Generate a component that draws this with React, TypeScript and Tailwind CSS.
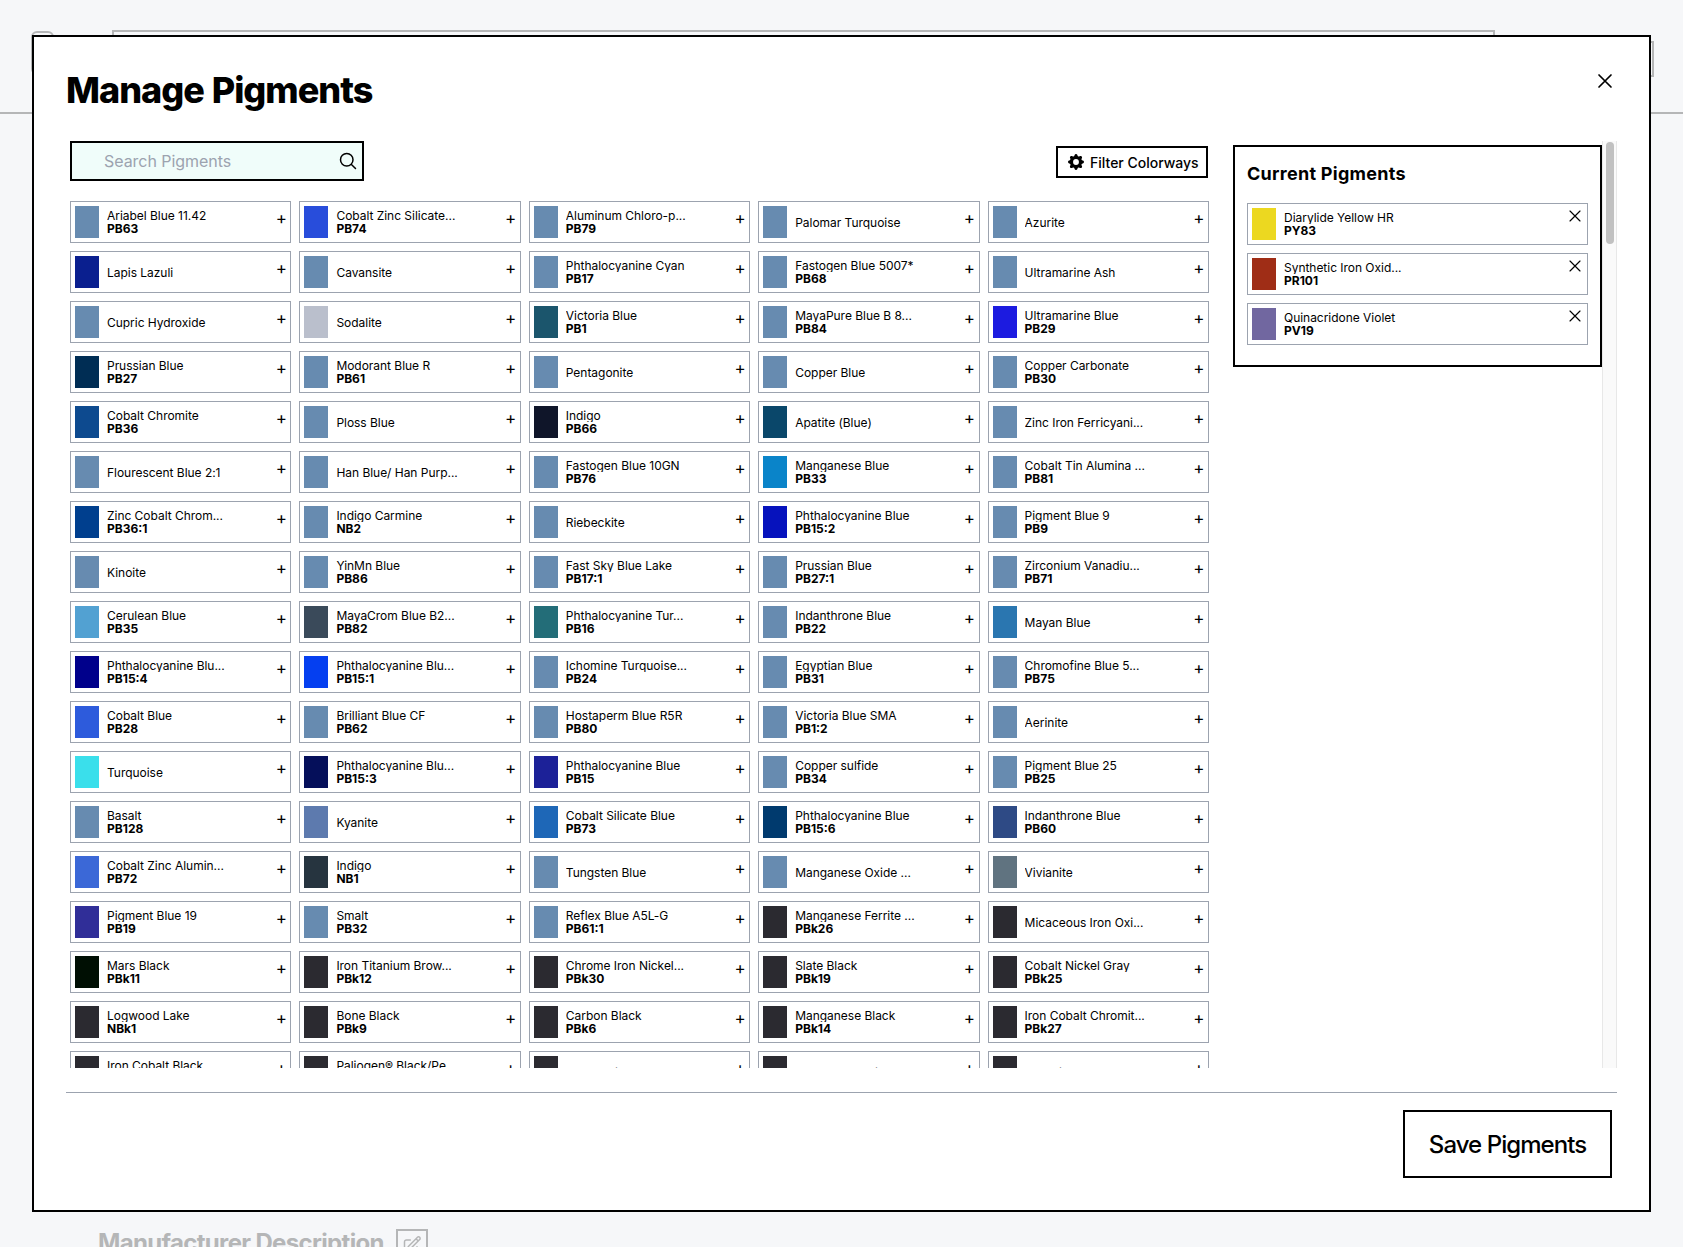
import React from "react";
import { BsGearFill } from "react-icons/bs";

type Pigment = { name: string; code?: string; color: string };

const BLUE = "#678bb0";
const BLACK = "#2b2a30";

const p = (name: string, code?: string, color: string = BLUE): Pigment => ({ name, code, color });

const pigments: Pigment[] = [
  p("Ariabel Blue 11.42", "PB63"),
  p("Cobalt Zinc Silicate...", "PB74", "#284ddb"),
  p("Aluminum Chloro-p...", "PB79"),
  p("Palomar Turquoise"),
  p("Azurite"),
  p("Lapis Lazuli", undefined, "#0a1f8f"),
  p("Cavansite"),
  p("Phthalocyanine Cyan", "PB17"),
  p("Fastogen Blue 5007*", "PB68"),
  p("Ultramarine Ash"),
  p("Cupric Hydroxide"),
  p("Sodalite", undefined, "#babfcc"),
  p("Victoria Blue", "PB1", "#1b556c"),
  p("MayaPure Blue B 8...", "PB84"),
  p("Ultramarine Blue", "PB29", "#1c1be0"),
  p("Prussian Blue", "PB27", "#002d54"),
  p("Modorant Blue R", "PB61"),
  p("Pentagonite"),
  p("Copper Blue"),
  p("Copper Carbonate", "PB30"),
  p("Cobalt Chromite", "PB36", "#0d4a8f"),
  p("Ploss Blue"),
  p("Indigo", "PB66", "#0f1529"),
  p("Apatite (Blue)", undefined, "#0a476a"),
  p("Zinc Iron Ferricyani..."),
  p("Flourescent Blue 2:1"),
  p("Han Blue/ Han Purp..."),
  p("Fastogen Blue 10GN", "PB76"),
  p("Manganese Blue", "PB33", "#0a84c9"),
  p("Cobalt Tin Alumina ...", "PB81"),
  p("Zinc Cobalt Chrom...", "PB36:1", "#003f8e"),
  p("Indigo Carmine", "NB2"),
  p("Riebeckite"),
  p("Phthalocyanine Blue", "PB15:2", "#0612bd"),
  p("Pigment Blue 9", "PB9"),
  p("Kinoite"),
  p("YinMn Blue", "PB86"),
  p("Fast Sky Blue Lake", "PB17:1"),
  p("Prussian Blue", "PB27:1"),
  p("Zirconium Vanadiu...", "PB71"),
  p("Cerulean Blue", "PB35", "#52a1d2"),
  p("MayaCrom Blue B2...", "PB82", "#3a4a5a"),
  p("Phthalocyanine Tur...", "PB16", "#236d78"),
  p("Indanthrone Blue", "PB22"),
  p("Mayan Blue", undefined, "#2a76b0"),
  p("Phthalocyanine Blu...", "PB15:4", "#00008b"),
  p("Phthalocyanine Blu...", "PB15:1", "#053ff0"),
  p("Ichomine Turquoise...", "PB24"),
  p("Egyptian Blue", "PB31"),
  p("Chromofine Blue 5...", "PB75"),
  p("Cobalt Blue", "PB28", "#2d5bdc"),
  p("Brilliant Blue CF", "PB62"),
  p("Hostaperm Blue R5R", "PB80"),
  p("Victoria Blue SMA", "PB1:2"),
  p("Aerinite"),
  p("Turquoise", undefined, "#3adfeb"),
  p("Phthalocyanine Blu...", "PB15:3", "#050f5a"),
  p("Phthalocyanine Blue", "PB15", "#1c2198"),
  p("Copper sulfide", "PB34"),
  p("Pigment Blue 25", "PB25"),
  p("Basalt", "PB128"),
  p("Kyanite", undefined, "#5d7aae"),
  p("Cobalt Silicate Blue", "PB73", "#1e67b7"),
  p("Phthalocyanine Blue", "PB15:6", "#003a6e"),
  p("Indanthrone Blue", "PB60", "#2e4a85"),
  p("Cobalt Zinc Alumin...", "PB72", "#3b68d7"),
  p("Indigo", "NB1", "#26343f"),
  p("Tungsten Blue"),
  p("Manganese Oxide ..."),
  p("Vivianite", undefined, "#607380"),
  p("Pigment Blue 19", "PB19", "#302e98"),
  p("Smalt", "PB32"),
  p("Reflex Blue A5L-G", "PB61:1"),
  p("Manganese Ferrite ...", "PBk26", BLACK),
  p("Micaceous Iron Oxi...", undefined, BLACK),
  p("Mars Black", "PBk11", "#000f03"),
  p("Iron Titanium Brow...", "PBk12", BLACK),
  p("Chrome Iron Nickel...", "PBk30", BLACK),
  p("Slate Black", "PBk19", BLACK),
  p("Cobalt Nickel Gray", "PBk25", BLACK),
  p("Logwood Lake", "NBk1", BLACK),
  p("Bone Black", "PBk9", BLACK),
  p("Carbon Black", "PBk6", BLACK),
  p("Manganese Black", "PBk14", BLACK),
  p("Iron Cobalt Chromit...", "PBk27", BLACK),
  p("Iron Cobalt Black", "PBk29", BLACK),
  p("Paliogen® Black/Pe...", "PBk31", BLACK),
  p("Black Spinel", undefined, BLACK),
  p("Black Tourmaline", undefined, BLACK),
  p("Graphite", undefined, BLACK),
];

const current: Pigment[] = [
  p("Diarylide Yellow HR", "PY83", "#ecd820"),
  p("Synthetic Iron Oxid...", "PR101", "#9f2d16"),
  p("Quinacridone Violet", "PV19", "#7167a0"),
];

function XMark({ className }: { className: string }) {
  return (
    <svg viewBox="0 0 24 24" fill="none" stroke="currentColor" strokeLinecap="round" strokeLinejoin="round" className={className}>
      <path d="M6 18L18 6M6 6l12 12" />
    </svg>
  );
}

function PigmentCard({ pigment, removable }: { pigment: Pigment; removable?: boolean }) {
  return (
    <div className="flex h-[42px] min-w-0 border border-[#9ca3af] p-1">
      <div className="h-8 w-6 shrink-0" style={{ backgroundColor: pigment.color }} />
      <div className="ml-2 flex min-w-0 flex-1 flex-col justify-center whitespace-nowrap text-[12px]">
        {pigment.code ? (
          <>
            <div className="-mt-px h-3 overflow-hidden leading-3 tracking-[-0.03px]">{pigment.name}</div>
            <div className="h-3 font-bold leading-[14px]">{pigment.code}</div>
          </>
        ) : (
          <div className="mt-px h-[14px] overflow-hidden leading-[14px] tracking-[-0.03px]">{pigment.name}</div>
        )}
      </div>
      {removable ? (
        <button className="-mr-[2px] -mt-[2px] h-5 w-5 shrink-0">
          <XMark className="h-5 w-5 stroke-[1.4]" />
        </button>
      ) : (
        <button className="-mr-[0.5px] mt-[2px] h-5 shrink-0 text-[17px] leading-5">+</button>
      )}
    </div>
  );
}

export default function App() {
  return (
    <div className="relative h-[1247px] w-[1683px] overflow-hidden bg-[#f6f7f9] font-['Inter',sans-serif] text-black">
      <div className="h-[114px] border-b-2 border-[#b5b6b7] pl-[31px] pt-[30px]">
        <div className="flex items-start">
          <div className="mt-px h-11 w-[23px] rounded-md border-2 border-[#b5b6b7]" />
          <div className="ml-[58px] h-12 w-[1383px] border-2 border-[#b5b6b7]" />
          <div className="ml-[60px] mt-[11px] h-9 w-[99px] border-2 border-[#b5b6b7]" />
        </div>
      </div>
      <div className="mt-[1115px] flex items-start pl-[98px] text-[#b5b6b7]">
        <h2 className="-mt-[2px] w-[298px] whitespace-nowrap text-[24px] font-bold leading-8 tracking-[-0.66px]">Manufacturer Description</h2>
        <div className="h-8 w-8 border-2 border-[#b5b6b7] p-1">
          <svg viewBox="0 0 24 24" fill="none" stroke="currentColor" strokeWidth={1.8} strokeLinecap="round" strokeLinejoin="round" className="h-5 w-5">
            <path d="M16.862 4.487l1.687-1.688a1.875 1.875 0 112.652 2.652L10.582 16.07a4.5 4.5 0 01-1.897 1.13L6 18l.8-2.685a4.5 4.5 0 011.13-1.897l8.932-8.931zm0 0L19.5 7.125M18 14v4.75A2.25 2.25 0 0115.75 21H5.25A2.25 2.25 0 013 18.75V8.25A2.25 2.25 0 015.25 6H10" />
          </svg>
        </div>
      </div>

      <div role="dialog" className="absolute left-8 top-[35px] flex h-[1177px] w-[1619px] flex-col border-2 border-black bg-white px-8">
        <header className="flex h-[104px] shrink-0 justify-between">
          <h1 className="mt-[33px] whitespace-nowrap text-[36px] font-extrabold leading-10 tracking-[-1px] [word-spacing:1px]">Manage Pigments</h1>
          <button className="mt-8 h-6 w-6">
            <XMark className="h-6 w-6 stroke-[1.7]" />
          </button>
        </header>

        <div className="flex h-[927px] shrink-0 overflow-hidden">
          <div className="w-[1143px] shrink-0 pl-1">
            <div className="flex h-10 items-start justify-between">
              <div className="flex h-10 w-[294px] items-center justify-between border-2 border-black bg-[#f0fdfa] pl-8 pr-1">
                <span className="text-[16px] leading-6 tracking-[-0.05px] text-[#9ca3af]">Search Pigments</span>
                <svg viewBox="0 0 24 24" fill="none" stroke="currentColor" strokeWidth={1.8} strokeLinecap="round" strokeLinejoin="round" className="h-5 w-5">
                  <path d="M21 21l-5.197-5.197m0 0A7.5 7.5 0 105.196 5.196a7.5 7.5 0 0010.607 10.607z" />
                </svg>
              </div>
              <button className="mr-px mt-[5px] flex h-8 w-[152px] items-center gap-1.5 whitespace-nowrap border-2 border-black pl-[10px] text-[14px] font-medium">
                <BsGearFill className="h-4 w-4 shrink-0" />
                Filter Colorways
              </button>
            </div>
            <div className="mt-5 grid grid-cols-5 gap-2">
              {pigments.map((pigment, i) => (
                <PigmentCard key={i} pigment={pigment} />
              ))}
            </div>
          </div>

          <aside className="ml-6 mt-1 h-[222px] w-[369px] shrink-0 border-2 border-black px-3">
            <h2 className="mt-[13px] text-[18px] font-bold leading-7 tracking-[0.27px]">Current Pigments</h2>
            <div className="mt-[15px] flex flex-col gap-2">
              {current.map((pigment) => (
                <PigmentCard key={pigment.code} pigment={pigment} removable />
              ))}
            </div>
          </aside>

          <div className="w-[15px] shrink-0 border-x border-[#e8e8e8] bg-[#fafafa] pl-[3px] pt-px">
            <div className="h-[102px] w-2 rounded-full bg-[#c1c1c1]" />
          </div>
        </div>

        <footer className="mt-6 flex justify-end border-t border-[#9ca3af] pr-[5px] pt-[17px]">
          <button className="h-[68px] w-[209px] whitespace-nowrap border-2 border-black pt-[2px] text-[24px] font-medium tracking-[-0.95px]">Save Pigments</button>
        </footer>
      </div>
    </div>
  );
}
